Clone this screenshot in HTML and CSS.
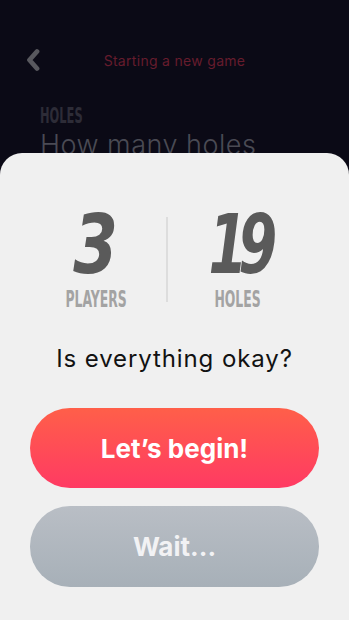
FILE: index.html
```html
<!DOCTYPE html>
<html>
<head>
<meta charset="utf-8">
<link rel="stylesheet" href="styles.css">
</head>
<body>
<div class="screen">
  <header class="topbar">
    <svg class="back" width="14" height="24" viewBox="0 0 14 24"><path d="M11 3.5 L3.5 12 L11 20.5" fill="none" stroke="#58585e" stroke-width="4.8" stroke-linecap="round" stroke-linejoin="round"/></svg>
    <div class="title">Starting a new game</div>
  </header>
  <section class="question">
    <div class="label"><span>HOLES</span></div>
    <div class="heading">How many holes</div>
  </section>
  <div class="sheet">
    <div class="stats">
      <div class="stat">
        <div class="num"><span>3</span></div>
        <div class="cap"><span>PLAYERS</span></div>
      </div>
      <div class="divider"></div>
      <div class="stat">
        <div class="num"><span class="tight">19</span></div>
        <div class="cap"><span>HOLES</span></div>
      </div>
    </div>
    <div class="ask">Is everything okay?</div>
    <button class="btn primary">Let’s begin!</button>
    <button class="btn secondary">Wait...</button>
  </div>
</div>
</body>
</html>
```
FILE: styles.css
```css
html, body { margin: 0; padding: 0; }
body { width: 349px; height: 620px; overflow: hidden; background: #0b0a16; font-family: "Inter", "Noto Sans", sans-serif; }
.screen { position: relative; width: 349px; height: 620px; }
.topbar { display: flex; align-items: center; padding: 48px 0 0 26px; height: 24px; }
.back { flex: none; }
.title { flex: 1; text-align: center; margin-right: 40px; color: #661c2d; font-size: 14px; letter-spacing: 0.3px; }
.question { padding: 34px 40px 0; }
.label { font-family: "DejaVu Sans", sans-serif; font-stretch: condensed; font-weight: bold; color: #2d2c37; font-size: 20.5px; line-height: 20px; height: 20px; }
.label span { display: inline-block; transform: scaleX(0.62); transform-origin: left center; }
.heading { color: #4a4a54; font-size: 27px; font-weight: 300; line-height: 32px; margin-top: 3px; letter-spacing: 0.5px; white-space: nowrap; }
.sheet { position: absolute; left: 0; right: 0; top: 153px; bottom: 0; background: #f0f0f0; border-radius: 22px 22px 0 0; display: flex; flex-direction: column; align-items: center; padding: 60px 30px 0; box-sizing: border-box; }
.stats { display: flex; align-items: stretch; width: 284px; align-self: flex-start; margin-left: -4px; }
.stat { width: 140px; display: flex; flex-direction: column; align-items: center; }
.num { font-family: "DejaVu Sans", sans-serif; font-stretch: condensed; font-weight: bold; font-style: italic; font-size: 82px; line-height: 64px; height: 64px; color: #5a5a5a; }
.num span { display: inline-block; transform: scaleX(0.87); }
.num .tight { letter-spacing: -12px; margin-right: 0; transform: scaleX(0.76); }
.cap { font-family: "DejaVu Sans", sans-serif; font-stretch: condensed; font-weight: bold; color: #a3a3a3; font-size: 23px; line-height: 20px; margin-top: 12px; }
.cap span { display: inline-block; transform: scaleX(0.6); }
.divider { width: 2px; background: #dddddd; margin: 4px 0 7px; flex: none; }
.ask { margin-top: 35px; font-size: 24px; line-height: 30px; color: #121212; letter-spacing: 0.9px; white-space: nowrap; }
.btn { display: block; flex: none; width: 100%; height: 80px; border: none; border-radius: 40px; color: #fff; font-family: "Inter", "Noto Sans", sans-serif; font-weight: 700; font-size: 26px; padding: 0; }
.primary { margin-top: 34px; background: linear-gradient(180deg, #ff5f49 0%, #ff3a63 100%); }
.secondary { margin-top: 18px; height: 81px; background: linear-gradient(180deg, #b9bec5 0%, #a7b0b8 100%); color: #f2f2f4; }
```
